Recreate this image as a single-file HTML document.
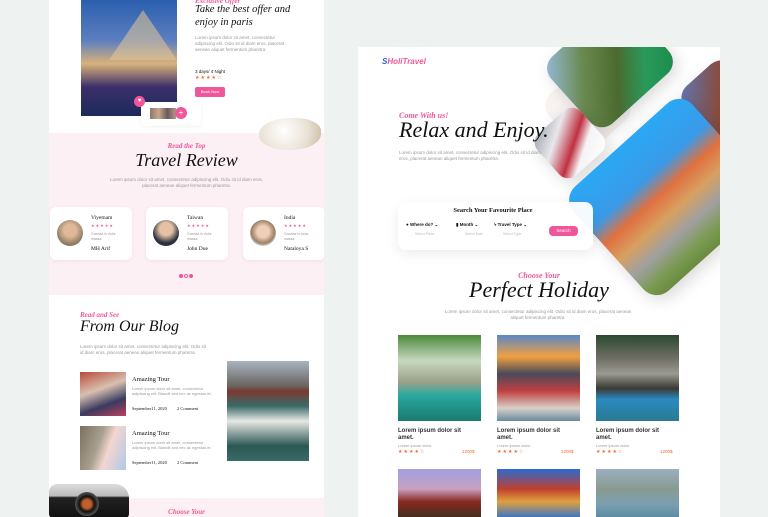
<!DOCTYPE html>
<html><head><meta charset="utf-8"><style>
*{margin:0;padding:0;box-sizing:border-box}
body{width:768px;height:517px;overflow:hidden;background:#eef3f2;font-family:"Liberation Sans",sans-serif;position:relative;color:#111}
.a{position:absolute}
.sc{font-family:"Liberation Serif",serif;font-style:italic;font-weight:bold;color:#f0579a}
.tt{font-family:"Liberation Serif",serif;font-style:italic;color:#111}
.lo{color:#999;font-size:4.5px;line-height:6px}
.st{color:#f0579a;font-size:5px;letter-spacing:1px}
.so{color:#f26a2c;font-size:5px;letter-spacing:1px}
.card{background:#fff;border-radius:6px;box-shadow:0 1px 4px rgba(0,0,0,.06)}
.av{border-radius:50%}
.dm{position:absolute;transform:rotate(-42deg);border-radius:16px;overflow:hidden;box-shadow:0 6px 16px rgba(0,0,0,.15)}
</style></head><body>
<!-- LEFT PAGE -->
<div class="a" style="left:49px;top:0;width:275px;height:517px;background:#fff;overflow:hidden">
 <div class="a" style="left:32px;top:0;width:96px;height:116px;background:linear-gradient(180deg,#2a5fae 0%,#5d7fc0 35%,#d9b27a 55%,#3b2f6a 75%,#1c2a5c 100%)"></div>
 <div class="a" style="left:60px;top:10px;width:0;height:0;border-left:34px solid transparent;border-right:34px solid transparent;border-bottom:50px solid rgba(230,200,150,.55)"></div>
 <div class="a sc" style="left:146px;top:-3px;font-size:7px">Exclusive Offer</div>
 <div class="a tt" style="left:146px;top:4px;font-size:10.5px;line-height:12.5px">Take the best offer and<br>enjoy in paris</div>
 <div class="a lo" style="left:146px;top:35px;width:90px">Lorem ipsum dolor sit amet, consectetur adipiscing elit. Odio sit id diam eros, placerat aenean aliquet fermentum pharetra.</div>
 <div class="a" style="left:146px;top:69px;font-size:4.5px">3 days/ 4 Night</div>
 <div class="a so" style="left:146px;top:75px">★★★★☆</div>
 <div class="a" style="left:146px;top:87px;width:30px;height:10px;background:#f0579a;border-radius:2px;color:#fff;font-size:4px;line-height:10px;text-align:center">Book Now</div>
 <div class="a card" style="left:92px;top:102px;width:60px;height:24px;border-radius:4px"></div>
 <div class="a" style="left:85px;top:96px;width:11px;height:11px;border-radius:50%;background:#f0579a;color:#fff;font-size:6px;text-align:center;line-height:11px">♥</div>
 <div class="a" style="left:101px;top:108px;width:26px;height:11px;background:linear-gradient(90deg,#8a7a6a,#c9a68c,#6a5a5a,#b89a88)"></div>
 <div class="a" style="left:126px;top:107px;width:12px;height:12px;border-radius:50%;background:#f0579a;color:#fff;font-size:8px;line-height:12px;text-align:center">+</div>
 <div class="a" style="left:0;top:133px;width:275px;height:162px;background:#fdf0f4"></div>
 <div class="a" style="left:210px;top:118px;width:62px;height:32px;border-radius:50% 40% 50% 45%;background:radial-gradient(circle at 40% 40%,#fff,#e8e0d4 60%,#c8b89c)"></div>
 <div class="a sc" style="left:0;top:142px;width:275px;text-align:center;font-size:7px">Read the Top</div>
 <div class="a tt" style="left:0;top:150px;width:275px;text-align:center;font-size:18px">Travel Review</div>
 <div class="a lo" style="left:60px;top:177px;width:155px;text-align:center">Lorem ipsum dolor sit amet, consectetur adipiscing elit. Odio sit id diam eros, placerat aenean aliquet fermentum pharetra.</div>
 <div class="a card" style="left:1px;top:207px;width:82px;height:53px"></div>
 <div class="a card" style="left:97px;top:207px;width:82px;height:53px"></div>
 <div class="a card" style="left:194px;top:207px;width:82px;height:53px"></div>
 <div class="a av" style="left:8px;top:220px;width:26px;height:26px;background:radial-gradient(circle at 50% 40%,#e0b89a 30%,#8a7a60 70%)"></div>
 <div class="a av" style="left:104px;top:220px;width:26px;height:26px;background:radial-gradient(circle at 50% 35%,#e4c0a4 30%,#2a3240 65%)"></div>
 <div class="a av" style="left:201px;top:220px;width:26px;height:26px;background:radial-gradient(circle at 50% 45%,#f0cfb6 30%,#9a8068 60%,#ddd 75%)"></div>
 <div class="a" style="left:42px;top:215px;font-size:5.5px;font-family:'Liberation Serif',serif">Viyetnam</div>
 <div class="a st" style="left:42px;top:223px;font-size:4px">★★★★★</div>
 <div class="a lo" style="left:42px;top:232px;font-size:3.5px;line-height:4.5px">Gravida in dolor<br>massa.</div>
 <div class="a" style="left:42px;top:246px;font-size:5.5px;font-family:'Liberation Serif',serif">MH Arif</div>
 <div class="a" style="left:138px;top:215px;font-size:5.5px;font-family:'Liberation Serif',serif">Taiwan</div>
 <div class="a st" style="left:138px;top:223px;font-size:4px">★★★★★</div>
 <div class="a lo" style="left:138px;top:232px;font-size:3.5px;line-height:4.5px">Gravida in dolor<br>massa.</div>
 <div class="a" style="left:138px;top:246px;font-size:5.5px;font-family:'Liberation Serif',serif">John Due</div>
 <div class="a" style="left:235px;top:215px;font-size:5.5px;font-family:'Liberation Serif',serif">India</div>
 <div class="a st" style="left:235px;top:223px;font-size:4px">★★★★★</div>
 <div class="a lo" style="left:235px;top:232px;font-size:3.5px;line-height:4.5px">Gravida in dolor<br>massa.</div>
 <div class="a" style="left:235px;top:246px;font-size:5.5px;font-family:'Liberation Serif',serif">Nataloya S</div>
 <div class="a" style="left:130px;top:274px;width:4px;height:4px;border-radius:50%;background:#f0579a"></div>
 <div class="a" style="left:135px;top:274px;width:4px;height:4px;border-radius:50%;border:1px solid #f0579a"></div>
 <div class="a" style="left:140px;top:274px;width:4px;height:4px;border-radius:50%;background:#f0579a"></div>
 <div class="a sc" style="left:31px;top:311px;font-size:7px">Read and See</div>
 <div class="a tt" style="left:31px;top:318px;font-size:16px">From Our Blog</div>
 <div class="a lo" style="left:31px;top:344px;width:130px">Lorem ipsum dolor sit amet, consectetur adipiscing elit. Odio sit id diam eros, placerat aenean aliquet fermentum pharetra.</div>
 <div class="a" style="left:31px;top:372px;width:46px;height:44px;background:linear-gradient(160deg,#b94a3a,#d8c0b0 40%,#3a3a60 70%,#c04060)"></div>
 <div class="a" style="left:31px;top:426px;width:46px;height:44px;background:linear-gradient(110deg,#7a7060 0%,#a8a090 40%,#f4d6d0 60%,#b0c8e8)"></div>
 <div class="a" style="left:83px;top:376px;font-size:6.5px;font-family:'Liberation Serif',serif">Amazing Tour</div>
 <div class="a lo" style="left:83px;top:386px;width:82px;font-size:4px;line-height:5px">Lorem ipsum dolor sit amet, consectetur adipiscing elit. Blandit sed nec ac egestas et.</div>
 <div class="a" style="left:83px;top:406px;font-size:4.5px;font-family:'Liberation Serif',serif">September11, 2020 &nbsp; &nbsp; &nbsp; &nbsp; 2 Comment</div>
 <div class="a" style="left:83px;top:430px;font-size:6.5px;font-family:'Liberation Serif',serif">Amazing Tour</div>
 <div class="a lo" style="left:83px;top:440px;width:82px;font-size:4px;line-height:5px">Lorem ipsum dolor sit amet, consectetur adipiscing elit. Blandit sed nec ac egestas et.</div>
 <div class="a" style="left:83px;top:460px;font-size:4.5px;font-family:'Liberation Serif',serif">September11, 2020 &nbsp; &nbsp; &nbsp; &nbsp; 2 Comment</div>
 <div class="a" style="left:178px;top:361px;width:82px;height:100px;background:linear-gradient(180deg,#a8b4c0 0%,#6a6460 25%,#7a3a30 30%,#3a6a68 45%,#e8e8e4 60%,#2a5854 85%,#3a6a68)"></div>
 <div class="a" style="left:0;top:498px;width:275px;height:20px;background:#fdf0f4"></div>
 <div class="a sc" style="left:0;top:508px;width:275px;text-align:center;font-size:7px">Choose Your</div>
 <div class="a" style="left:0;top:484px;width:80px;height:34px;border-radius:8px 14px 4px 4px;background:linear-gradient(180deg,#ddd 0%,#bbb 35%,#222 40%,#111)"></div>
 <div class="a" style="left:26px;top:492px;width:24px;height:24px;border-radius:50%;background:radial-gradient(circle,#c0602a 25%,#111 45%,#555 70%,#222)"></div>
</div>
<!-- RIGHT PAGE -->
<div class="a" style="left:358px;top:47px;width:362px;height:470px;background:#fff;overflow:hidden">
 <div class="dm" style="left:195px;top:25px;width:70px;height:70px;background:#f8f3f1;box-shadow:none"></div>
 <div class="dm" style="left:199px;top:-27px;width:106px;height:90px;background:linear-gradient(130deg,#9ac0e8 0%,#6a8a50 30%,#4a6a30 55%,#2a9a5a 75%,#1a8a4a)"></div>
 <div class="dm" style="left:330px;top:20px;width:64px;height:64px;background:linear-gradient(135deg,#5a7ac0,#8a4a3a 50%,#6a3a2a)"></div>
 <div class="dm" style="left:183px;top:68px;width:58px;height:56px;border-radius:12px;background:linear-gradient(150deg,#9aa0a8 0%,#e8e8ec 30%,#c03040 55%,#f4f4f6 70%,#fff)"></div>
 <div class="dm" style="left:230px;top:80px;width:160px;height:140px;border-radius:18px;background:linear-gradient(180deg,#2aa8f4 0%,#3a9ae8 30%,#e07040 45%,#d8a060 60%,#a0a0a0 75%,#7a9a50 90%,#6a8a40)"></div>
 <div class="a" style="left:24px;top:10px;font-size:8px;font-weight:bold;font-style:italic;color:#f0579a"><span style="color:#2a6ad0">S</span>HoliTravel</div>
 <div class="a sc" style="left:41px;top:64px;font-size:8px">Come With us!</div>
 <div class="a tt" style="left:41px;top:70px;font-size:22px">Relax and Enjoy.</div>
 <div class="a lo" style="left:41px;top:103px;width:145px">Lorem ipsum dolor sit amet, consectetur adipiscing elit. Odio sit id diam eros, placerat aenean aliquet fermentum pharetra.</div>
 <div class="a" style="left:40px;top:155px;width:195px;height:48px;background:rgba(255,255,255,.95);border-radius:8px;box-shadow:0 4px 12px rgba(0,0,0,.08)"></div>
 <div class="a" style="left:40px;top:160px;width:190px;text-align:center;font-size:6.5px;font-family:'Liberation Serif',serif;font-weight:bold">Search Your Favourite Place</div>
 <div class="a" style="left:48px;top:175px;font-size:4.5px;font-weight:bold">● Where do? ⌄</div>
 <div class="a" style="left:98px;top:175px;font-size:4.5px;font-weight:bold">▮ Month ⌄</div>
 <div class="a" style="left:136px;top:175px;font-size:4.5px;font-weight:bold">ϟ Travel Type ⌄</div>
 <div class="a" style="left:57px;top:185px;font-size:3.5px;color:#bbb">Select Place</div>
 <div class="a" style="left:107px;top:185px;font-size:3.5px;color:#bbb">Select Date</div>
 <div class="a" style="left:145px;top:185px;font-size:3.5px;color:#bbb">Select Type</div>
 <div class="a" style="left:191px;top:179px;width:29px;height:10px;border-radius:4px;background:#f0579a;color:#fff;font-size:4.5px;line-height:10px;text-align:center">Search</div>
 <div class="a sc" style="left:0;top:224px;width:362px;text-align:center;font-size:8px">Choose Your</div>
 <div class="a tt" style="left:0;top:230px;width:362px;text-align:center;font-size:22px;">Perfect Holiday</div>
 <div class="a lo" style="left:85px;top:262px;width:190px;text-align:center">Lorem ipsum dolor sit amet, consectetur adipiscing elit. Odio sit id diam eros, placerat aenean aliquet fermentum pharetra.</div>
 <div class="a" style="left:40px;top:288px;width:83px;height:86px;background:linear-gradient(180deg,#4a8a3a 0%,#c8d8c0 30%,#9aa08a 55%,#2aa8a0 70%,#1a7a70)"></div>
 <div class="a" style="left:139px;top:288px;width:83px;height:86px;background:linear-gradient(180deg,#5a88c8 0%,#f0a040 25%,#4a4a5a 45%,#c04040 65%,#d8d0c8 85%,#6a8aa0)"></div>
 <div class="a" style="left:238px;top:288px;width:83px;height:86px;background:linear-gradient(180deg,#2a4a30 0%,#6a6a60 25%,#9a9a90 45%,#3a3a34 62%,#2a8ac0 75%,#2a7a90)"></div>
 <div class="a" style="left:40px;top:381px;width:70px;font-size:6px;font-weight:bold;color:#333;line-height:7px">Lorem ipsum dolor sit amet.</div>
 <div class="a" style="left:139px;top:381px;width:70px;font-size:6px;font-weight:bold;color:#333;line-height:7px">Lorem ipsum dolor sit amet.</div>
 <div class="a" style="left:238px;top:381px;width:70px;font-size:6px;font-weight:bold;color:#333;line-height:7px">Lorem ipsum dolor sit amet.</div>
 <div class="a lo" style="left:40px;top:396px;font-size:4px">Lorem ipsum dolor.</div>
 <div class="a lo" style="left:139px;top:396px;font-size:4px">Lorem ipsum dolor.</div>
 <div class="a lo" style="left:238px;top:396px;font-size:4px">Lorem ipsum dolor.</div>
 <div class="a so" style="left:40px;top:402px">★★★★☆</div><div class="a so" style="left:104px;top:402px;letter-spacing:0;font-size:4.5px">1200$</div>
 <div class="a so" style="left:139px;top:402px">★★★★☆</div><div class="a so" style="left:203px;top:402px;letter-spacing:0;font-size:4.5px">1200$</div>
 <div class="a so" style="left:238px;top:402px">★★★★☆</div><div class="a so" style="left:302px;top:402px;letter-spacing:0;font-size:4.5px">1200$</div>
 <div class="a" style="left:40px;top:422px;width:83px;height:50px;background:linear-gradient(180deg,#a0a0e0 0%,#c8a0c0 40%,#8a2a20 65%,#3a3020)"></div>
 <div class="a" style="left:139px;top:422px;width:83px;height:50px;background:linear-gradient(180deg,#2a6ad0 0%,#c04030 40%,#e0a040 65%,#2a70d0)"></div>
 <div class="a" style="left:238px;top:422px;width:83px;height:50px;background:linear-gradient(180deg,#9ab0c0 0%,#8a9a90 40%,#7aa0b0 70%,#5a88a0)"></div>
</div>
</body></html>
